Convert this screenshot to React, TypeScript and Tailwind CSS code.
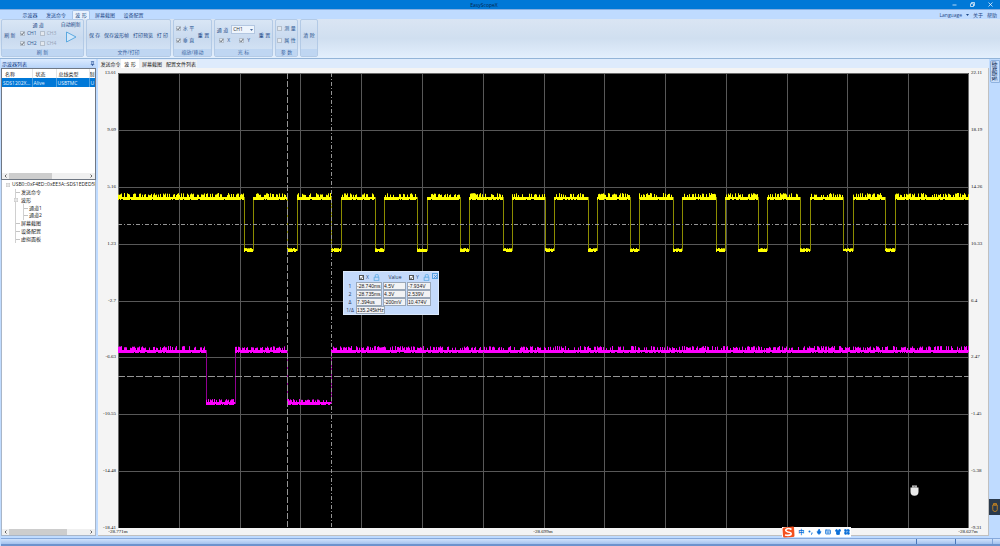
import React from "react";
import { LayoutGrid, Mic, Shirt, Keyboard, Pin } from "lucide-react";

const LEFT_AXIS = ["13.01", "9.09", "5.16", "1.23", "-2.7", "-6.63", "-10.55", "-14.48", "-18.41"];
const RIGHT_AXIS = ["22.11", "18.19", "14.26", "10.33", "6.4", "2.47", "-1.45", "-5.38", "-9.31"];
const TIME_AXIS = ["-28.771m", "-28.699m", "-28.627m"];

type Segment = { from: number; to: number; top: number; bottom: number; spike: number };

function noise(seed: number) {
  let s = seed;
  return () => {
    s = (s * 1103515245 + 12345) % 2147483648;
    return s / 2147483648;
  };
}

/* One vertical stroke per sample column, between a ragged top and a flat base. */
function bandPath(segments: Segment[], seed: number) {
  const rnd = noise(seed);
  let d = "";
  for (const seg of segments) {
    for (let x = seg.from; x < seg.to; x += 1) {
      const r = rnd();
      const top = seg.top - (r > 0.45 ? r * seg.spike : 0);
      const bottom = seg.bottom - (rnd() > 0.85 ? 1 : 0);
      d += `M${x + 0.5} ${top.toFixed(1)}V${bottom}`;
    }
  }
  return d;
}

const CLOCK_LOWS: [number, number][] = [
  [126, 135], [169, 179], [213, 223], [257, 266], [299, 309], [342, 351], [385, 394], [427, 436],
  [470, 479], [512, 521], [555, 564], [598, 607], [640, 649], [682, 692], [725, 735], [767, 777],
];
const DATA_LOWS: [number, number][] = [[88, 117], [169, 213]];

function segmentsOf(lows: [number, number][], high: number, low: number, lowSpike: number): Segment[] {
  const out: Segment[] = [];
  let x = 0;
  for (const [a, b] of lows) {
    out.push({ from: x, to: a, top: high, bottom: high + 3, spike: 4 });
    out.push({ from: a, to: b, top: low, bottom: low + 3, spike: lowSpike });
    x = b;
  }
  out.push({ from: x, to: 851, top: high, bottom: high + 3, spike: 4 });
  return out;
}

function edgePath(lows: [number, number][], top: number, bottom: number) {
  return lows.map(([a, b]) => `M${a + 0.5} ${top}V${bottom}M${b + 0.5} ${top}V${bottom}`).join("");
}

const CLOCK = bandPath(segmentsOf(CLOCK_LOWS, 124, 176, 1), 7);
const DATA = bandPath(segmentsOf(DATA_LOWS, 277, 329, 3), 19);

function Waveform() {
  return (
    <svg className="block h-full w-full" viewBox="0 0 851 455" preserveAspectRatio="none" aria-label="波形">
      <rect width="851" height="455" fill="#000" />
      <g stroke="#585858" strokeWidth="1">
        {Array.from({ length: 13 }, (_, i) => {
          const x = Math.round(((i + 1) * 851) / 14) + 0.5;
          return <path key={i} d={`M${x} 0V455`} />;
        })}
        {Array.from({ length: 7 }, (_, i) => {
          const y = Math.round(((i + 1) * 455) / 8) + 0.5;
          return <path key={i} d={`M0 ${y}H851`} />;
        })}
      </g>
      <path d="M0.5 455V0.5H850.5V455" fill="none" stroke="#6a6a6a" />
      <path d={edgePath(CLOCK_LOWS, 124, 178)} stroke="#8c8c00" />
      <path d={CLOCK} stroke="#ffff00" />
      <path d={edgePath(DATA_LOWS, 277, 331)} stroke="#900090" />
      <path d={DATA} stroke="#ff00ff" />
      <g stroke="#959595" strokeWidth="1">
        <path d="M169.5 0V455" strokeDasharray="6 2" />
        <path d="M213.5 0V455" strokeDasharray="4 2 1 2" />
        <path d="M0 151.5H851" strokeDasharray="4 2 1 2" />
        <path d="M0 303.5H851" strokeDasharray="7 2" />
      </g>
    </svg>
  );
}

function Check({ label, checked, disabled, white }: { label: string; checked?: boolean; disabled?: boolean; white?: boolean }) {
  return (
    <label className={`flex items-center gap-[2px] whitespace-pre ${disabled ? "text-[#98a5b8]" : "text-[#2d5792]"}`}>
      <span className="relative flex size-[5px]">
        <input
          type="checkbox"
          defaultChecked={checked}
          disabled={disabled}
          className={`peer size-[5px] appearance-none border ${white ? "border-[#555] bg-white" : "border-[#b4bfcc] bg-[#e3e8ee]"}`}
        />
        <svg viewBox="0 0 10 10" className="pointer-events-none absolute inset-0 hidden size-[5px] peer-checked:block">
          <path d="M2 5l2.2 2.6L8.2 2.2" fill="none" stroke="#39434f" strokeWidth="1.5" />
        </svg>
      </span>
      {label}
    </label>
  );
}

function Group({ title, width, children }: { title: string; width: string; children: React.ReactNode }) {
  return (
    <section className={`flex flex-col rounded-[2px] border border-[#b3cae6] bg-linear-to-b from-[#d9e6f5] via-[#c9daef] to-[#d6e5f6] ${width}`}>
      <div className="flex flex-1 items-center justify-around">{children}</div>
      <h2 className="h-[7px] bg-[#bfd6f2] text-center leading-[7px] whitespace-pre text-[#3c66a3]">{title}</h2>
    </section>
  );
}

function RibbonButton({ children }: { children: React.ReactNode }) {
  return <button className="whitespace-pre text-[#1f4a88]">{children}</button>;
}

function Ribbon() {
  return (
    <div className="flex h-[40px] gap-[2px] border-b border-[#93b4d8] bg-linear-to-b from-[#dae5f3] via-[#d0dff0] to-[#e3effd] px-px pb-px">
      <Group title="刷 新" width="w-[83px]">
        <RibbonButton>刷 新</RibbonButton>
        <div role="group" className="flex flex-col items-center gap-[2px]">
          <span className="leading-[6px] whitespace-pre text-[#1f4a88]">通 道</span>
          <div className="grid grid-cols-2 gap-x-[3px] gap-y-[3px] leading-[7px]">
            <Check label="CH1" checked />
            <Check label="CH3" disabled />
            <Check label="CH2" checked />
            <Check label="CH4" disabled />
          </div>
        </div>
        <button className="flex flex-col items-center gap-[3px] self-start pt-px leading-[7px] text-[#1f4a88]">
          自动刷新
          <svg className="size-[12px]" viewBox="0 0 12 12">
            <path d="M1.5 1L11 6L1.5 11Z" fill="#d3e7fa" stroke="#4fa3de" strokeWidth="0.9" />
          </svg>
        </button>
      </Group>
      <Group title="文件/打印" width="w-[85px]">
        <RibbonButton>保 存</RibbonButton>
        <RibbonButton>保存波形帧</RibbonButton>
        <RibbonButton>打印预览</RibbonButton>
        <RibbonButton>打 印</RibbonButton>
      </Group>
      <Group title="缩放/移动" width="w-[39px]">
        <div className="flex flex-col gap-[5px] leading-[7px]">
          <Check label="水 平" checked />
          <Check label="垂 直" checked />
        </div>
        <RibbonButton>重 置</RibbonButton>
      </Group>
      <Group title="光 标" width="w-[59px]">
        <div className="flex flex-col gap-[3px]">
          <label className="flex items-center gap-[3px] whitespace-pre text-[#1f4a88]">
            通 道
            <span className="relative flex">
              <select className="h-[9px] w-[24px] appearance-none border border-[#b3c7e1] bg-[#eef5fd] px-px text-[5px] leading-[7px] text-[#333]">
                <option>CH1</option>
              </select>
              <svg className="pointer-events-none absolute top-[4px] right-[2px] h-[2px] w-[3px]" viewBox="0 0 6 4">
                <path d="M0 0H6L3 4Z" fill="#4b6c9d" />
              </svg>
            </span>
          </label>
          <div className="flex gap-[9px] px-[2px] leading-[7px]">
            <Check label=" X" checked />
            <Check label=" Y" checked />
          </div>
        </div>
        <RibbonButton>重 置</RibbonButton>
      </Group>
      <Group title="参 数" width="w-[23px]">
        <div className="flex flex-col gap-[5px] leading-[7px]">
          <Check label="测 量" />
          <Check label="属 性" />
        </div>
      </Group>
      <Group title=" " width="w-[18px]">
        <RibbonButton>清 除</RibbonButton>
      </Group>
    </div>
  );
}

function TitleBar() {
  return (
    <header className="grid h-[9px] grid-cols-3 items-center bg-[#0078d7]">
      <span />
      <h1 className="pr-[32px] text-center text-[5px] text-[#06284d]">EasyScopeX</h1>
      <div className="flex justify-end gap-[13px] pr-[7px]">
        <button aria-label="最小化">
          <svg className="size-[5px]" viewBox="0 0 10 10"><path d="M1 6H9" stroke="#fff" strokeWidth="1.4" /></svg>
        </button>
        <button aria-label="还原">
          <svg className="size-[5px]" viewBox="0 0 10 10">
            <path d="M1 3.5H7V9H1ZM3 3.5V1H9V7H7" fill="none" stroke="#fff" strokeWidth="1.4" />
          </svg>
        </button>
        <button aria-label="关闭">
          <svg className="size-[5px]" viewBox="0 0 10 10"><path d="M1 1L9 9M9 1L1 9" stroke="#fff" strokeWidth="1.4" /></svg>
        </button>
      </div>
    </header>
  );
}

function MenuBar() {
  return (
    <nav className="flex h-[10px] items-stretch border-t border-[#86aee0] bg-[#bfdbff] pl-[20px] text-[#1f4a88]">
      <button className="w-[20px]">示波器</button>
      <button className="w-[32px]">发送命令</button>
      <button className="w-[18px] rounded-t-[2px] border border-b-0 border-[#a5c3ea] bg-[#e8f2fe]">波 形</button>
      <button className="w-[30px]">屏幕截图</button>
      <button className="w-[27px]">设备配置</button>
      <div className="flex flex-1 items-center justify-end gap-[4px] pr-[3px]">
        <button className="flex items-center gap-[4px]">
          Language
          <svg className="h-[2px] w-[3px]" viewBox="0 0 6 4"><path d="M0 0H6L3 4Z" fill="#1f4a88" /></svg>
        </button>
        <button>关于</button>
        <button>帮助</button>
      </div>
    </nav>
  );
}

function ScrollBar({ thumb }: { thumb: string }) {
  return (
    <div className="flex h-[6px] items-center gap-[2px] bg-[#f0f0f0] px-[2px]">
      <svg className="h-[4px] w-[3px]" viewBox="0 0 6 8"><path d="M5 1L2 4L5 7" fill="none" stroke="#444" strokeWidth="1.6" /></svg>
      <div className="h-full flex-1"><div className={`h-full bg-[#cdcdcd] ${thumb}`} /></div>
      <svg className="h-[4px] w-[3px]" viewBox="0 0 6 8"><path d="M1 1L4 4L1 7" fill="none" stroke="#444" strokeWidth="1.6" /></svg>
    </div>
  );
}

function Expander() {
  return (
    <svg className="size-[4px] shrink-0" viewBox="0 0 8 8">
      <path d="M0.5 0.5H7.5V7.5H0.5ZM2 4H6" fill="#fff" stroke="#999" />
    </svg>
  );
}

function Tree() {
  const leaf = "flex flex-1 items-center gap-px before:h-px before:w-[4px] before:bg-[#c4c4c4]";
  return (
    <div className="mt-px flex h-[62px] flex-col leading-[7px] text-[#222]">
      <div className="flex flex-1 items-center gap-[2px] overflow-hidden pl-[4px] whitespace-nowrap">
        <Expander />
        USB0::0xF4ED::0xEE3A::SDS1EDED5R
      </div>
      <div className="ml-[13px] flex flex-[7] flex-col border-l border-[#d0d0d0]">
        <div className={leaf}>发送命令</div>
        <div className="-ml-[2px] flex flex-1 items-center gap-[3px]">
          <Expander />
          波形
        </div>
        <div className="ml-[7px] flex flex-[2] flex-col border-l border-[#d0d0d0]">
          <div className={leaf}>通道1</div>
          <div className={leaf}>通道2</div>
        </div>
        <div className={leaf}>屏幕截图</div>
        <div className={leaf}>设备配置</div>
        <div className={leaf}>虚拟面板</div>
      </div>
    </div>
  );
}

function SidePanel() {
  return (
    <aside className="flex w-[96px] flex-col pl-px">
      <div className="flex h-[9px] items-center justify-between bg-linear-to-b from-[#dcebff] to-[#b7d3f8] px-px text-[#15428b]">
        <h2>示波器列表</h2>
        <Pin className="size-[5px]" strokeWidth={3} />
      </div>
      <div className="flex h-[112px] flex-col border border-[#6f7783] bg-white">
        <div className="flex-1 overflow-hidden">
          <table className="w-full table-fixed text-left leading-[8px]">
            <thead>
              <tr className="h-[9px] text-[#222]">
                <th className="w-[30px] pl-[3px] font-normal">名称</th>
                <th className="w-[24px] border-l border-[#e5e5e5] pl-[3px] font-normal">状态</th>
                <th className="w-[33px] border-l border-[#e5e5e5] pl-[2px] font-normal">总线类型</th>
                <th className="overflow-hidden border-l border-[#e5e5e5] font-normal whitespace-nowrap">制</th>
              </tr>
            </thead>
            <tbody>
              <tr className="h-[9px] bg-[#0078d7] text-[#e6f2fd]">
                <td className="truncate pl-px">SDS1202X...</td>
                <td className="border-l border-[#4e9fe0] pl-px">Alive</td>
                <td className="border-l border-[#4e9fe0] pl-px">USBTMC</td>
                <td className="overflow-hidden border-l border-[#4e9fe0] pl-px whitespace-nowrap">U</td>
              </tr>
            </tbody>
          </table>
        </div>
        <ScrollBar thumb="w-[54%]" />
      </div>
      <div className="flex flex-1 flex-col justify-between border border-t-0 border-[#a9b6c8] bg-white">
        <Tree />
        <ScrollBar thumb="w-[74%]" />
      </div>
    </aside>
  );
}

const ROWS = [
  ["1", "-28.740ms", "4.5V", "-7.934V"],
  ["2", "-28.735ms", "4.3V", "2.539V"],
  ["Δ", "7.394us", "-200mV", "10.474V"],
  ["1/Δ", "135.245kHz"],
];

const VALUE_WIDTHS = ["w-[26px]", "w-[23px]", "w-[24px]"];

function LockToggle() {
  return (
    <button aria-label="锁定">
      <svg className="size-[7px]" viewBox="0 0 12 12">
        <path d="M2 5.5H10V11.5H2ZM4 5.5V2.5Q4 .8 6 .8H7.5Q9 .8 9 2.5V5.5" fill="none" stroke="#58a9e4" strokeWidth="1.4" />
      </svg>
    </button>
  );
}

function CursorPanel() {
  return (
    <div className="absolute top-[198px] left-[225px] flex w-[96px] border border-[#dce9fb] bg-[#c4dafb] text-[#1d3455]">
      <table className="w-[88px] table-fixed">
        <thead>
          <tr className="h-[10px] leading-[8px]">
            <th className="w-[12px]" />
            <th className="w-[27px] font-normal"><div className="flex items-center justify-center gap-[4px]"><Check label="X" checked white /><LockToggle /></div></th>
            <th className="w-[24px] font-normal">Value</th>
            <th className="w-[25px] font-normal"><div className="flex items-center justify-center gap-[4px]"><Check label="Y" checked white /><LockToggle /></div></th>
          </tr>
        </thead>
        <tbody>
          {ROWS.map(([name, ...values]) => (
            <tr key={name}>
              <th className="text-center font-normal">{name}</th>
              {values.map((v, i) => (
                <td key={i} className="p-0">
                  <input
                    aria-label={`${name} ${["X", "Value", "Y"][i]}`}
                    readOnly
                    value={v}
                    className={`block h-[8px] border border-[#9aa7b8] bg-[#f2f3f5] font-['Liberation_Sans',sans-serif] text-[#222] ${values.length === 1 ? "w-[29px]" : VALUE_WIDTHS[i]}`}
                  />
                </td>
              ))}
            </tr>
          ))}
        </tbody>
      </table>
      <button aria-label="关闭" className="mt-px flex size-[6px] items-center justify-center border border-[#5aa2e2] text-[#2f83cf]">
        <svg className="size-[3px]" viewBox="0 0 6 6"><path d="M0 0L6 6M6 0L0 6" stroke="#2f83cf" strokeWidth="1.4" /></svg>
      </button>
    </div>
  );
}

function ImeBar() {
  return (
    <div className="absolute bottom-[9px] left-[782px] flex h-[10px] w-[69px] items-center justify-between bg-white pr-px text-[#0a6fd8]">
      <svg className="h-[12px] w-[13px] shrink-0" viewBox="0 0 26 24">
        <path d="M4 3L22 1Q24 1 24 3L25 19Q25 22 22 22L5 23Q2 23 2 20L1 6Q1 3 4 3Z" fill="#f4511e" />
        <path d="M19 7Q13 3 8 7Q6 10 12 12Q20 13 18 17Q14 20 6 18" fill="none" stroke="#fff" strokeWidth="3.2" />
      </svg>
      <span className="text-[6px] font-bold">中</span>
      <svg className="size-[5px]" viewBox="0 0 10 10">
        <circle cx="3" cy="3" r="2" fill="currentColor" />
        <path d="M8 5Q9 8 6 9" fill="none" stroke="currentColor" strokeWidth="2" />
      </svg>
      <Mic className="size-[6px]" strokeWidth={3} fill="currentColor" />
      <Keyboard className="size-[6px]" strokeWidth={3} />
      <Shirt className="size-[6px]" strokeWidth={3} fill="currentColor" />
      <LayoutGrid className="size-[6px]" strokeWidth={3} fill="currentColor" />
    </div>
  );
}

function VerticalAxis({ values, side }: { values: string[]; side: string }) {
  return (
    <div className={`flex flex-col justify-between px-[2px] ${side}`}>
      {values.map((v) => (
        <span key={v} className="flex h-0 items-center">{v}</span>
      ))}
    </div>
  );
}

function Document() {
  return (
    <main className="ml-[2px] flex min-w-0 flex-1 flex-col">
      <div className="flex h-[9px] items-end bg-[#deebfc] pl-[2px] text-[#222]">
        <button className="h-[8px] w-[21px] bg-[#eef0f2]">发送命令</button>
        <button className="h-[9px] w-[18px] bg-white">波 形</button>
        <button className="h-[8px] w-[26px] bg-[#eef0f2]">屏幕截图</button>
        <button className="h-[8px] w-[32px] bg-[#eef0f2]">配置文件列表</button>
      </div>
      <div className="flex flex-1 flex-col border-r border-b border-[#c0c0c0] bg-[#f4f4f4] pt-[5px] font-['Liberation_Serif',serif] text-[5px] text-[#111]">
        <div className="flex flex-1">
          <VerticalAxis values={LEFT_AXIS} side="w-[20px] items-end" />
          <div className="relative min-w-0 flex-1">
            <div className="absolute inset-0"><Waveform /></div>
            <div className="font-['Open_Sans','Noto_Sans_CJK_SC',sans-serif]"><CursorPanel /></div>
            <svg className="absolute right-[50px] bottom-[32px] h-[11px] w-[9px]" viewBox="0 0 18 22">
              <path d="M4 1H14V5H4Z" fill="#d8d8d8" />
              <path d="M6 2V4M9 2V4M12 2V4" stroke="#333" />
              <path d="M1 5H17V14Q17 21 9 21.5Q1 21 1 14Z" fill="#e9e9e9" />
            </svg>
          </div>
          <VerticalAxis values={RIGHT_AXIS} side="w-[19px] items-start" />
        </div>
        <div className="flex h-[7px] items-center justify-between px-[20px]">
          {TIME_AXIS.map((t) => (
            <span key={t} className="flex w-0 justify-center">{t}</span>
          ))}
        </div>
      </div>
    </main>
  );
}

function RightRail() {
  return (
    <aside className="flex w-[11px] flex-col items-end justify-between pt-px pb-[21px]">
      <button className="flex h-[23px] w-[10px] items-center justify-center rounded-l-[2px] border border-[#8fb2df] bg-[#c9defa] font-medium text-[#15315d] [text-orientation:sideways] [writing-mode:vertical-rl]">
        虚拟面板
      </button>
      <button aria-label="工具" className="flex h-[16px] w-full items-center justify-center bg-[#2b3a4c]">
        <svg className="h-[9px] w-[6px]" viewBox="0 0 12 18">
          <path d="M3 1H9V4H3ZM1.5 4H10.5V13Q10.5 17 6 17Q1.5 17 1.5 13Z" fill="none" stroke="#d48a1c" strokeWidth="1.6" />
        </svg>
      </button>
    </aside>
  );
}

export default function App() {
  return (
    <div className="relative flex h-screen flex-col overflow-hidden bg-[#bfdbff] font-['Open_Sans','Noto_Sans_CJK_SC',sans-serif] text-[5px] leading-[8px]">
      <TitleBar />
      <MenuBar />
      <Ribbon />
      <div className="flex min-h-0 flex-1 pb-[2px]">
        <SidePanel />
        <Document />
        <RightRail />
      </div>
      <footer className="ml-px flex h-[8px] justify-end border-t border-b-2 border-t-[#86a9dc] border-b-[#6d93cd] bg-linear-to-b from-[#d0e2fb] to-[#a3c2ee]">
        <div className="w-[39px] border-l border-[#4a77b8]" />
        <div className="w-[37px] border-l border-[#4a77b8]" />
        <div className="w-[8px] border-l border-[#7fa3d8]" />
      </footer>
      <ImeBar />
    </div>
  );
}
